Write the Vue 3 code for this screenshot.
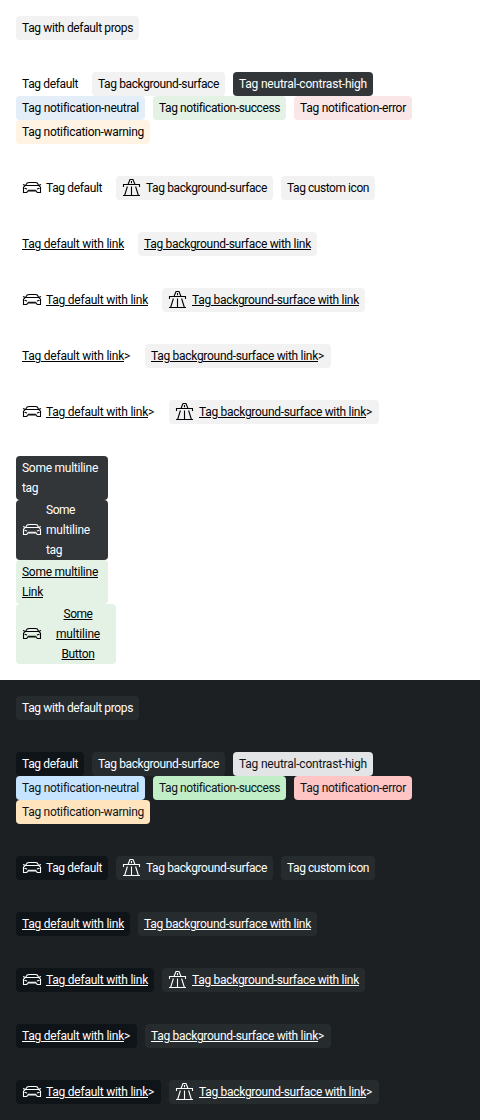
<script setup>
// Label widths in px; letter spacing is adjusted so each label fills its width.
const T = {
  props: ['Tag with default props', 111],
  def: ['Tag default', 56],
  surface: ['Tag background-surface', 121],
  high: ['Tag neutral-contrast-high', 128],
  neutral: ['Tag notification-neutral', 117],
  success: ['Tag notification-success', 121],
  error: ['Tag notification-error', 106],
  warning: ['Tag notification-warning', 122],
  custom: ['Tag custom icon', 82],
  defLink: ['Tag default with link', 102],
  surfaceLink: ['Tag background-surface with link', 167],
}
const tag = (key, color, opts = {}) => ({ lines: [T[key]], color, ...opts })
const linkRow = (icons, arrow) => [
  tag('defLink', 'base', { link: true, icon: icons && 'car', arrow }),
  tag('surfaceLink', 'surface', { link: true, icon: icons && 'highway', arrow }),
]
const rows = [
  [tag('props', 'surface')],
  [
    tag('def', 'base'), tag('surface', 'surface'), tag('high', 'high'),
    tag('neutral', 'neutral'), tag('success', 'success'), tag('error', 'error'),
    tag('warning', 'warning'),
  ],
  [tag('def', 'base', { icon: 'car' }), tag('surface', 'surface', { icon: 'highway' }), tag('custom', 'surface')],
  linkRow(false, false),
  linkRow(true, false),
  linkRow(false, true),
  linkRow(true, true),
]
const multiline = [
  { color: 'high', lines: [['Some multiline', 76], ['tag', 16]] },
  { color: 'high', icon: 'car', lines: [['Some', 29], ['multiline', 44], ['tag', 16]] },
  { color: 'success', link: true, lines: [['Some multiline', 76], ['Link', 21]] },
  { color: 'success', link: true, icon: 'car', button: true, lines: [['Some', 29], ['multiline', 44], ['Button', 33]] },
]
const themes = [
  { name: 'light', rows: [...rows, multiline] },
  { name: 'dark', rows },
]
const vFit = {
  mounted(el, { value }) {
    const width = el.getBoundingClientRect().width
    el.style.letterSpacing = `${(value - width) / el.textContent.length}px`
  },
}
</script>

<template>
  <main>
    <section v-for="theme in themes" :key="theme.name" class="panel" :class="theme.name">
      <div v-for="(row, r) in theme.rows" :key="r" class="row" :class="{ stack: r === 7 }">
        <span
          v-for="(t, i) in row"
          :key="i"
          class="tag"
          :class="[t.color, { multi: t.lines.length > 1, 'with-icon': t.icon, button: t.button }]"
        >
          <svg v-if="t.icon === 'car'" class="icon" viewBox="0 0 20 20">
            <path d="M1.5 9.2 3.5 7.5 5.2 5 7 4.5h6.5l1.8.5 1.4 2.5 1.8 1.7v5.3h-3.3l-.8-1.5H5.6l-.8 1.5H1.5zM3.5 7.5h13.2M1 6.5l2 .8M19 6.5l-2 .8M2.5 10.2l2.6.8M17.5 10.2l-2.6.8" />
            <path d="M6 12.3h8" />
          </svg>
          <svg v-else-if="t.icon === 'highway'" class="icon" viewBox="0 0 20 20">
            <path d="M1.5 9V6.5h16V9M6 6.5l2-5h3l2 5M9.5 3v2.2M5.4 8.5 2.6 17.5M13.6 8.5l2.8 9M1 17.5h17M9.5 8.5v9" />
          </svg>
          <span class="label">
            <span v-for="(line, l) in t.lines" :key="l" class="line"><span v-fit="line[1]" class="text" :class="{ link: t.link }">{{ line[0] }}</span><span v-if="t.arrow" v-fit="7">&gt;</span></span>
          </span>
        </span>
      </div>
    </section>
  </main>
</template>

<style>
body {
  margin: 0;
}
</style>

<style scoped>
main {
  font: 12px/20px Roboto, "Liberation Sans", sans-serif;
  font-variant-ligatures: none;
  width: 480px;
}
.panel {
  display: flex;
  flex-direction: column;
  gap: 32px;
  padding: 16px;
}
.light {
  background: #fff;
  --ink: #010205;
  --ink-high: #fff;
  --ink-note: #010205;
  --base: #fff;
  --surface: #f2f2f2;
  --high: #323639;
  --neutral: #e4eef9;
  --success: #e4f2e5;
  --error: #fae6e7;
  --warning: #fff4e3;
}
.dark {
  background: #1c2023;
  --ink: #fff;
  --ink-high: #0e1418;
  --ink-note: #0e1418;
  --base: #0e1418;
  --surface: #262b2e;
  --high: #e3e4e5;
  --neutral: #c6e4ff;
  --success: #c1eec7;
  --error: #ffc4c4;
  --warning: #ffe4be;
}
.row {
  display: flex;
  flex-wrap: wrap;
  column-gap: 8px;
}
.stack {
  flex-direction: column;
  align-items: flex-start;
}
.tag {
  display: flex;
  align-items: center;
  gap: 4px;
  box-sizing: border-box;
  padding: 2px 6px;
  border-radius: 4px;
  color: var(--ink);
}
.base { background: var(--base); }
.surface { background: var(--surface); }
.high { background: var(--high); color: var(--ink-high); }
.neutral { background: var(--neutral); color: var(--ink-note); }
.success { background: var(--success); color: var(--ink-note); }
.error { background: var(--error); color: var(--ink-note); }
.warning { background: var(--warning); color: var(--ink-note); }
.multi { width: 92px; }
.multi.with-icon { padding-block: 0; }
.button { width: 100px; text-align: center; }
.button .label { flex: 1; }
.icon {
  width: 20px;
  height: 20px;
  flex: none;
  fill: none;
  stroke: currentColor;
  stroke-width: 1.1;
}
.line {
  display: block;
  white-space: nowrap;
}
.link {
  text-decoration: underline;
  text-decoration-thickness: 1px;
  text-decoration-skip-ink: auto;
}
</style>
